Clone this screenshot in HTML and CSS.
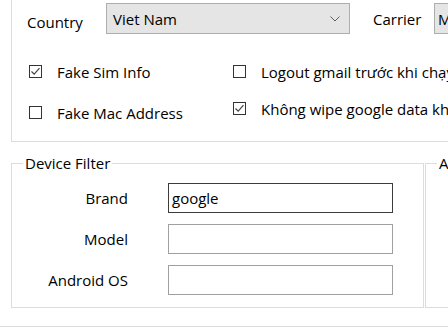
FILE: index.html
```html
<!DOCTYPE html>
<html lang="vi">
<head>
  <meta charset="UTF-8" />
  <title>Settings</title>
  <link rel="stylesheet" href="styles.css">
</head>
<body>
  <div class="group top-group">
    <div class="row-combo">
      <span class="lbl country-lbl">Country</span>
      <div class="combo country-combo">
        <span>Viet Nam</span>
        <svg class="chev" width="10" height="6" viewBox="0 0 10 6"><path d="M0.5 0.5 L5 5 L9.5 0.5" fill="none" stroke="#606060" stroke-width="1"/></svg>
      </div>
      <span class="lbl carrier-lbl">Carrier</span>
      <div class="combo carrier-combo"><span>M</span></div>
    </div>

    <div class="checks">
      <label class="chk c1"><span class="box checked"><svg width="11" height="11" viewBox="0 0 11 11"><path d="M1.5 5.5 L4.2 8.2 L9.5 2.2" fill="none" stroke="#444" stroke-width="1.2"/></svg></span>Fake Sim Info</label>
      <label class="chk c2"><span class="box"></span>Logout gmail trước khi chạy</label>
      <label class="chk c3"><span class="box"></span>Fake Mac Address</label>
      <label class="chk c4"><span class="box checked"><svg width="11" height="11" viewBox="0 0 11 11"><path d="M1.5 5.5 L4.2 8.2 L9.5 2.2" fill="none" stroke="#444" stroke-width="1.2"/></svg></span>Không wipe google data khi chạy</label>
    </div>
  </div>

  <div class="lower">
    <fieldset class="group filter">
      <legend>Device Filter</legend>
      <div class="form">
        <span class="flbl">Brand</span>
        <div class="txt focused">google</div>
        <span class="flbl">Model</span>
        <div class="txt"></div>
        <span class="flbl">Android OS</span>
        <div class="txt"></div>
      </div>
    </fieldset>
    <fieldset class="group other">
      <legend>Advanced</legend>
    </fieldset>
  </div>

  <div class="bottom-line"></div>
</body>
</html>
```

FILE: styles.css
```css
* {
  box-sizing: border-box;
}

html, body {
  margin: 0;
  padding: 0;
  background: #fff;
  overflow: hidden;
}

body {
  width: 448px;
  height: 327px;
  font-family: 'Open Sans', 'Noto Sans', sans-serif;
  font-size: 15px;
  color: #000;
}

.group {
  border: 1px solid #dcdcdc;
}

.top-group {
  margin-left: 11px;
  width: 460px;
  height: 142px;
  border-top: none;
  border-right: none;
  padding-top: 3px;
}

.row-combo {
  display: flex;
  align-items: center;
  height: 31px;
}

.lbl {
  flex: none;
  white-space: nowrap;
}

.country-lbl {
  margin-left: 15px;
  margin-top: 6px;
  width: 79px;
}

.combo {
  flex: none;
  height: 31px;
  background: #e5e5e5;
  border: 1px solid #adadad;
  display: flex;
  align-items: center;
  padding-left: 6px;
  white-space: nowrap;
}

.country-combo {
  width: 244px;
  justify-content: space-between;
  padding-right: 9px;
}

.carrier-lbl {
  margin-left: 23px;
  width: 61px;
}

.carrier-combo {
  width: 40px;
  padding-left: 3px;
}

.checks {
  display: grid;
  grid-template-columns: 204px 230px;
  row-gap: 20px;
  margin-top: 29px;
  padding-left: 17px;
}

.chk {
  display: flex;
  align-items: center;
  white-space: nowrap;
  height: 17px;
}

.c3 {
  margin-top: 4px;
}

.box {
  width: 13px;
  height: 13px;
  border: 1px solid #333;
  margin-right: 15px;
  flex: none;
  display: flex;
  align-items: center;
  justify-content: center;
  background: #fff;
}

.lower {
  display: flex;
  margin-top: 14px;
  margin-left: 11px;
}

fieldset.group {
  flex: none;
  margin: 0;
  padding: 0;
  height: 152px;
  min-width: 0;
}

legend {
  padding: 0 2px;
  margin-left: 11px;
  line-height: 14px;
  white-space: nowrap;
}

.filter {
  width: 413px;
}

.other {
  margin-left: 1px !important;
  width: 40px;
  border-right: none !important;
}

.form {
  display: grid;
  grid-template-columns: 116px 225px;
  column-gap: 40px;
  row-gap: 11px;
  align-items: center;
  margin-top: 13px;
}

.flbl {
  text-align: right;
  white-space: nowrap;
}

.txt {
  height: 30px;
  border: 1px solid #a0a0a0;
  background: #fff;
  padding: 4px 3px;
  line-height: 20px;
}

.txt.focused {
  border-color: #3c3c3c;
}

.bottom-line {
  margin-top: 18px;
  height: 2px;
  border-top: 1px solid #dcdcdc;
}
```
